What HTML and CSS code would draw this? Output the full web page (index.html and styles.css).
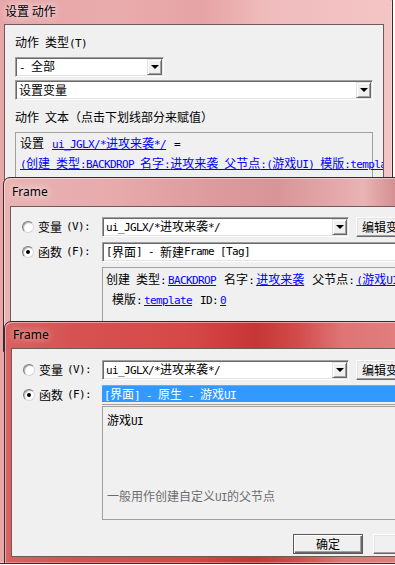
FILE: index.html
```html
<!DOCTYPE html>
<html lang="zh-CN">
<head>
  <meta charset="UTF-8">
  <meta name="viewport" content="width=device-width, initial-scale=1.0">
  <title>设置 动作</title>
  <link rel="stylesheet" href="styles.css">
</head>
<body>
  <div class="desk">

    <div class="win w1">
      <div class="cap"><span>设置 动作</span></div>
      <div class="client">
        <div class="lbl">动作<span class="m"> </span>类型<span class="m">(T)</span></div>
        <div class="combo short">
          <span class="val"><span class="m">- </span>全部</span>
          <span class="drop"></span>
        </div>
        <div class="combo wide">
          <span class="val">设置变量</span>
          <span class="drop"></span>
        </div>
        <div class="lbl gap">动作<span class="m"> </span>文本（点击下划线部分来赋值）</div>
        <div class="textbox">
          <div>设置<span class="m"> </span><a class="lk"><span class="m">ui_JGLX/*</span>进攻来袭<span class="m">*/</span></a><span class="m"> =</span></div>
          <div><a class="lk flat"><span class="m">(</span>创建<span class="m"> </span>类型<span class="m">:BACKDROP </span>名字<span class="m">:</span>进攻来袭<span class="m"> </span>父节点<span class="m">:(</span>游戏<span class="m">UI) </span>模版<span class="m">:template ID:0)</span></a></div>
        </div>
      </div>
    </div>

    <div class="win w2">
      <div class="cap"><span>Frame</span></div>
      <div class="client">
        <div class="form">
          <label class="opt"><span class="radio"></span>变量<span class="m">(V):</span></label>
          <div class="pick">
            <div class="combo var">
              <span class="val"><span class="m">ui_JGLX/*</span>进攻来袭<span class="m">*/</span></span>
              <span class="drop"></span>
            </div>
            <div class="btn">编辑变量</div>
          </div>
          <label class="opt"><span class="radio on"></span>函数<span class="m">(F):</span></label>
          <div class="edit"><span class="m">[</span>界面<span class="m">] - </span>新建<span class="m">Frame [Tag]</span></div>
          <div class="info">
            <div>创建<span class="m"> </span>类型<span class="m">:</span><a class="lk"><span class="m">BACKDROP</span></a><span class="m"> </span>名字<span class="m">:</span><a class="lk">进攻来袭</a><span class="m"> </span>父节点<span class="m">:</span><a class="lk"><span class="m">(</span>游戏<span class="m">UI)</span></a></div>
            <div><span class="m"> </span>模版<span class="m">:</span><a class="lk"><span class="m">template</span></a><span class="m"> ID:</span><a class="lk"><span class="m">0</span></a></div>
          </div>
        </div>
      </div>
    </div>

    <div class="win w3">
      <div class="cap"><span>Frame</span></div>
      <div class="client">
        <div class="form">
          <label class="opt"><span class="radio"></span>变量<span class="m">(V):</span></label>
          <div class="pick">
            <div class="combo var">
              <span class="val"><span class="m">ui_JGLX/*</span>进攻来袭<span class="m">*/</span></span>
              <span class="drop"></span>
            </div>
            <div class="btn">编辑变量</div>
          </div>
          <label class="opt"><span class="radio on"></span>函数<span class="m">(F):</span></label>
          <div class="list">
            <div class="sel"><span class="m">[</span>界面<span class="m">] - </span>原生<span class="m"> - </span>游戏<span class="m">UI</span></div>
          </div>
          <div class="desc">
            <div>游戏<span class="m">UI</span></div>
            <div class="note">一般用作创建自定义<span class="m">UI</span>的父节点</div>
          </div>
        </div>
        <div class="btns">
          <div class="btn def">确定</div>
          <div class="btn">取消</div>
        </div>
      </div>
    </div>

  </div>
</body>
</html>
```

FILE: styles.css
```css
* {
  box-sizing: border-box;
}
body {
  margin: 0;
  background: #fff;
  font-family: "Noto Sans CJK SC", sans-serif;
  font-size: 12px;
  line-height: 18px;
  color: #000;
}
.desk {
  position: relative;
  width: 395px;
  height: 565px;
  overflow: hidden;
}

/* half-width latin, like the old bitmap font */
.m {
  font-family: "DejaVu Sans Mono", monospace;
  font-size: 11px;
  letter-spacing: -0.62px;
  white-space: pre;
}
.lk {
  color: #00f;
  text-decoration: underline;
  margin: 0 2px;
}
.lk.flat {
  margin: 0;
}

/* windows */
.win {
  position: absolute;
  display: flex;
  flex-direction: column;
  padding: 0 6px 6px;
  border: 1px solid #3a2a2b;
  border-radius: 7px 7px 0 0;
  box-shadow: inset 1px 1px rgba(255, 255, 255, 0.45), inset -1px -1px rgba(255, 255, 255, 0.3);
}
.cap {
  flex: none;
  display: flex;
  align-items: center;
  padding-left: 2px;
  white-space: nowrap;
}
.cap span {
  text-shadow: 0 0 6px rgba(255, 255, 255, 0.9), 0 0 12px rgba(255, 255, 255, 0.7);
}
.client {
  flex: 1;
  min-height: 0;
  background: #f0f0f0;
  border: 1px solid #6e5a5b;
  overflow: hidden;
}

.w1 {
  left: -4px;
  top: -6px;
  width: 397px;
  height: 570px;
  padding: 0 8px 8px 7px;
  background: linear-gradient(90deg, #e7a6a8 0%, #e9abad 30%, #e6a3a5 52%, #f0bbbc 68%, #f4c5c5 100%);
}
.w1 .cap {
  height: 29px;
  padding-left: 1px;
  padding-top: 2px;
}
.w1 .client {
  display: flex;
  flex-direction: column;
  padding: 8px 10px 0 10px;
}

.w2 {
  left: 3px;
  top: 177px;
  width: 457px;
  height: 175px;
  background: linear-gradient(90deg, #eab2b3 0%, #e6aaab 25%, #dd9b9d 45%, #d89597 60%, #e4aaac 74%, #e9b4b5 79%, #d48f91 86%, #dfa3a5 100%);
}
.w2 .cap,
.w3 .cap {
  font-family: "Noto Sans", sans-serif;
}
.w2 .cap {
  height: 28px;
}

.w3 {
  left: 4px;
  top: 321px;
  width: 457px;
  height: 243px;
  background: linear-gradient(90deg, #d86262 0%, #d65252 15%, #d74848 40%, #c63636 55%, #d24a4a 64%, #df7474 74%, #e17e7e 86%, #d86a6a 100%);
}
.w3 .cap {
  height: 26px;
}
.w3 .cap span {
  text-shadow: 0 0 6px rgba(255, 220, 220, 0.8), 0 0 12px rgba(255, 210, 210, 0.6);
}

/* settings dialog */
.lbl {
  white-space: nowrap;
}
.lbl.gap {
  margin-top: 8px;
}
.short {
  width: 149px;
  margin-top: 4px;
}
.wide {
  margin-top: 3px;
}
.textbox {
  margin-top: 4px;
  height: 60px;
  padding: 1px 4px;
  border: 1px solid #a0a0a0;
  white-space: nowrap;
}

/* controls */
.combo,
.edit {
  display: flex;
  align-items: center;
  height: 20px;
  background: #fff;
  border: 1px solid;
  border-color: #a0a0a0 #fff #fff #a0a0a0;
  box-shadow: inset 1px 1px #696969, inset -1px -1px #e3e3e3;
  white-space: nowrap;
  overflow: hidden;
}
.combo {
  padding: 0 1px 0 2px;
}
.edit {
  padding-left: 3px;
}
.val {
  flex: 1;
  min-width: 0;
  overflow: hidden;
  padding-left: 1px;
}
.drop {
  flex: none;
  display: flex;
  align-items: center;
  justify-content: center;
  width: 15px;
  height: 16px;
  background: #f0f0f0;
  border: 1px solid;
  border-color: #e3e3e3 #696969 #696969 #e3e3e3;
  box-shadow: inset 1px 1px #fff, inset -1px -1px #a0a0a0;
}
.drop::after {
  content: "";
  border-style: solid;
  border-width: 4px 4px 0;
  border-color: #000 transparent transparent;
}
.btn {
  flex: none;
  display: flex;
  align-items: center;
  justify-content: center;
  width: 70px;
  height: 20px;
  background: #f0f0f0;
  border: 1px solid;
  border-color: #fff #696969 #696969 #fff;
  box-shadow: inset -1px -1px #a0a0a0, inset 1px 1px #e3e3e3;
  white-space: nowrap;
}
.btn.def {
  border-color: #5a5a5a;
  box-shadow: inset 1px 1px #fff, inset -1px -1px #696969, inset -2px -2px #a0a0a0;
}

/* frame picker */
.form {
  display: grid;
  grid-template-columns: 91px 1fr;
  row-gap: 5px;
  padding: 10px 10px 0 0;
}
.w3 .form {
  grid-template-columns: 90px 1fr;
  padding-top: 11px;
}
.opt {
  display: flex;
  align-items: center;
  gap: 4px;
  padding-left: 11px;
  white-space: nowrap;
}
.radio {
  flex: none;
  display: flex;
  align-items: center;
  justify-content: center;
  width: 12px;
  height: 12px;
  border-radius: 50%;
  border: 1px solid;
  border-color: #7d7d7d #d8d8d8 #d8d8d8 #7d7d7d;
  background: radial-gradient(circle at 60% 60%, #fff 45%, #e2e2e2 100%);
  box-shadow: inset 1px 1px rgba(0, 0, 0, 0.25);
}
.radio.on::after {
  content: "";
  width: 4px;
  height: 4px;
  border-radius: 50%;
  background: #000;
}
.pick {
  display: flex;
  gap: 7px;
}
.pick .combo {
  width: 247px;
}
.pick .btn {
  width: 60px;
}
.info {
  grid-column: 2;
  height: 60px;
  padding: 2px 3px;
  border: 1px solid #a0a0a0;
  white-space: nowrap;
  overflow: hidden;
}
.list {
  height: 20px;
  border-top: 1px solid #a0a0a0;
  border-bottom: 1px solid #a0a0a0;
  padding-bottom: 2px;
}
.sel {
  height: 16px;
  line-height: 16px;
  padding-left: 2px;
  background: #3399ff;
  color: #fff;
  white-space: nowrap;
}
.desc {
  grid-column: 2;
  display: flex;
  flex-direction: column;
  height: 114px;
  margin-top: -4px;
  padding: 4px 4px 12px;
  border: 1px solid #a0a0a0;
  white-space: nowrap;
}
.note {
  margin-top: auto;
  color: #6d6d6d;
}
.btns {
  display: flex;
  justify-content: flex-end;
  gap: 10px;
  margin-top: 14px;
  padding-right: 10px;
}
```
